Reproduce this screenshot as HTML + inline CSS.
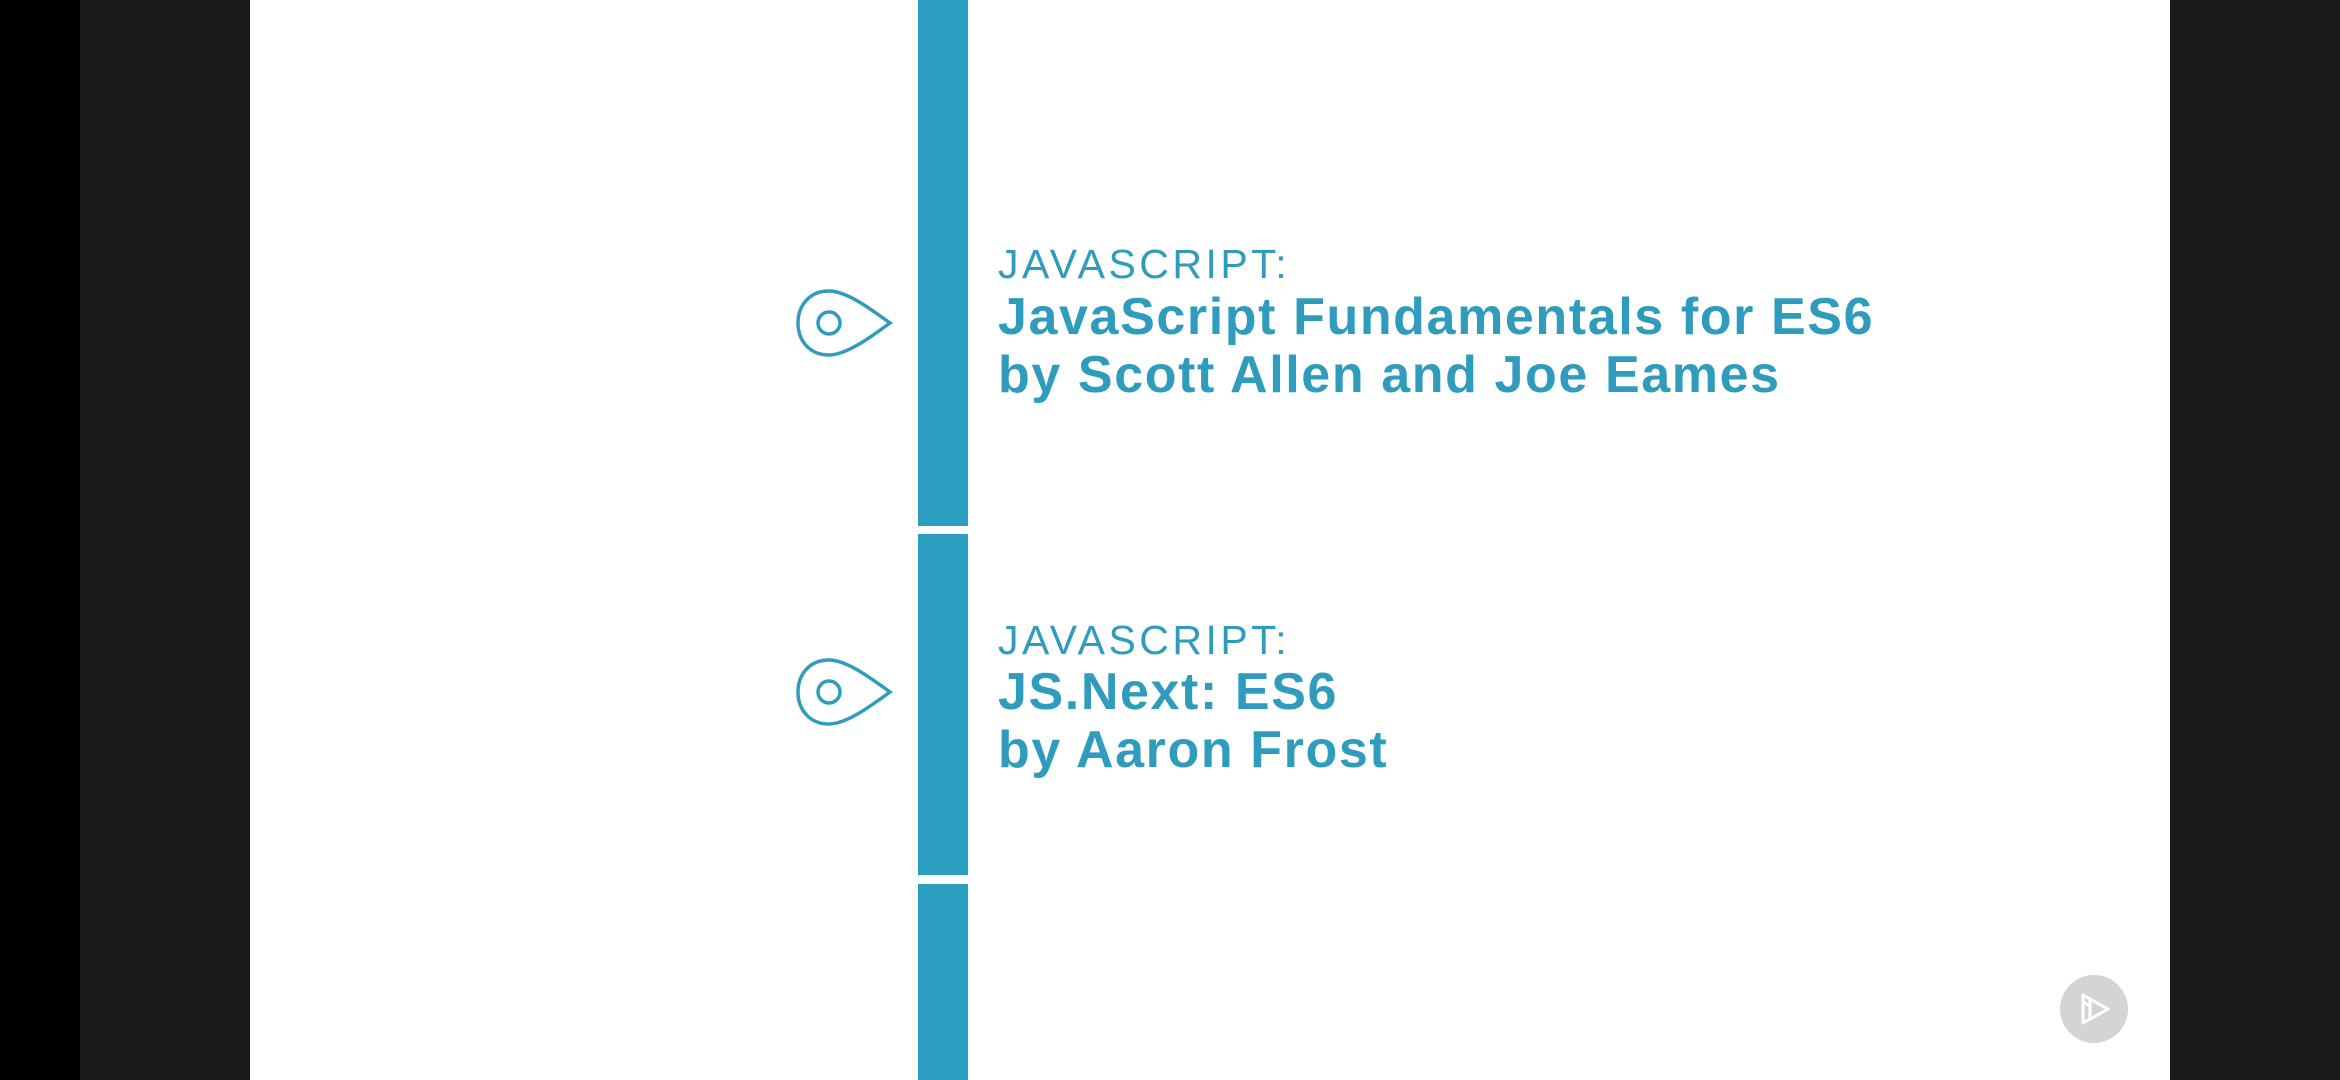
<!DOCTYPE html>
<html><head><style>
body{margin:0;width:2340px;height:1080px;overflow:hidden;background:#000;position:relative;font-family:"Liberation Sans",sans-serif}
.g{position:absolute;left:80px;top:0;width:170px;height:1080px;background:#1a1a1a}
.w{position:absolute;left:250px;top:0;width:1920px;height:1080px;background:#fff}
.r{position:absolute;left:2170px;top:0;width:170px;height:1080px;background:#1a1a1b}
.bar{position:absolute;left:918px;width:50px;background:#2a9fc0}
.lab{position:absolute;left:998px;color:#2f9cbd;font-size:41px;letter-spacing:3.5px;line-height:1;white-space:nowrap}
.t{position:absolute;left:998px;color:#2f9cbd;font-size:52px;font-weight:bold;line-height:58px;white-space:nowrap;letter-spacing:1.6px}
</style></head><body>
<div class="g"></div><div class="w"></div><div class="r"></div>
<div class="bar" style="top:0;height:526px"></div>
<div class="bar" style="top:534px;height:341px"></div>
<div class="bar" style="top:884px;height:196px"></div>
<div class="lab" style="top:244px">JAVASCRIPT:</div>
<div class="t" style="top:288px">JavaScript Fundamentals for ES6<br>by Scott Allen and Joe Eames</div>
<div class="lab" style="top:620px">JAVASCRIPT:</div>
<div class="t" style="top:663px">JS.Next: ES6<br>by Aaron Frost</div>
<svg style="position:absolute;left:792px;top:286px" width="106" height="74" viewBox="0 0 106 74"><path d="M37 5 C17 5 6 20 6 37 C6 54 17 69 37 69 C55 69 80 50 98 37 C80 24 55 5 37 5 Z" fill="none" stroke="#2f9cbd" stroke-width="3.5"/><circle cx="37" cy="37" r="11" fill="none" stroke="#2f9cbd" stroke-width="3.5"/></svg>
<svg style="position:absolute;left:792px;top:655px" width="106" height="74" viewBox="0 0 106 74"><path d="M37 5 C17 5 6 20 6 37 C6 54 17 69 37 69 C55 69 80 50 98 37 C80 24 55 5 37 5 Z" fill="none" stroke="#2f9cbd" stroke-width="3.5"/><circle cx="37" cy="37" r="11" fill="none" stroke="#2f9cbd" stroke-width="3.5"/></svg>
<svg style="position:absolute;left:2060px;top:975px" width="68" height="68" viewBox="0 0 68 68"><circle cx="34" cy="34" r="34" fill="#d4d4d4"/><path d="M23 20 L48 34 L23 48 Z M23 27 L30 31" fill="none" stroke="#fff" stroke-width="3" stroke-linejoin="round"/><path d="M30 24 L30 44" stroke="#fff" stroke-width="3"/></svg>
</body></html>
